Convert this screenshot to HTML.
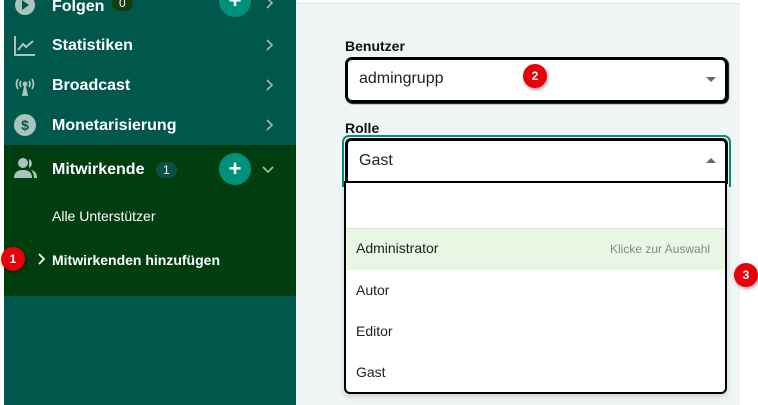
<!DOCTYPE html>
<html><head><style>
*{margin:0;padding:0;box-sizing:border-box}
body{width:758px;height:405px;overflow:hidden;background:#fff;font-family:"Liberation Sans",sans-serif;position:relative}
.sb{position:absolute;left:4px;top:0;width:292px;height:405px;background:#00574c}
.act{position:absolute;left:4px;top:145px;width:292px;height:151px;background:#003e0f}
.item{position:absolute;left:52px;color:#fff;font-weight:bold;font-size:16px}
.chev{position:absolute;left:264px;width:10px;height:12px}
.ico{position:absolute;left:14px;width:22px;height:22px}
.plus{position:absolute;left:219px;width:32px;height:32px;border-radius:50%;background:#00917c;color:#fff;text-align:center;line-height:31px;font-size:22px;font-weight:bold}
.badge{position:absolute;background:#0b5047;color:#fff;font-size:12px;border-radius:8px;padding:1px 7px}
.main{position:absolute;left:296px;top:3px;width:444px;height:402px;background:#eff6f5;border-top:1px solid #d5e8d8}
.lbl{position:absolute;left:345px;font-weight:bold;font-size:14px;color:#111}
.num{position:absolute;width:24px;height:24px;border-radius:50%;background:#e8000b;color:#fff;font-weight:bold;font-size:12px;text-align:center;line-height:24px;box-shadow:1px 2px 3px rgba(0,0,0,.35)}
.opt{position:absolute;left:356px;font-size:14px;color:#222}
</style></head><body>
<div class="sb"></div><div class="act"></div>
<svg class="ico" style="top:-6px" viewBox="0 0 22 22"><circle cx="11" cy="11" r="10" fill="#a9c4bd"/><path d="M8 6v10l7-5z" fill="#00574c"/></svg>
<div class="item" style="top:-2px">Folgen</div>
<div class="badge" style="left:112px;top:-5px;background:#0e3d10">0</div>
<div class="plus" style="top:-15px">+</div>
<svg class="chev" style="top:-3px" viewBox="0 0 10 12"><path d="M3 1l5 5-5 5" fill="none" stroke="#9fbdb6" stroke-width="1.6"/></svg>

<svg class="ico" style="top:35px" viewBox="0 0 22 22" fill="none" stroke="#a9c4bd" stroke-width="2"><path d="M1 1v19h20M4 15l5-6 3 3 7-6"/></svg>
<div class="item" style="top:37px">Statistiken</div>
<svg class="chev" style="top:39px" viewBox="0 0 10 12"><path d="M3 1l5 5-5 5" fill="none" stroke="#9fbdb6" stroke-width="1.6"/></svg>

<svg class="ico" style="top:75px" viewBox="0 0 22 22" fill="none" stroke="#a9c4bd" stroke-width="1.8"><path d="M4 4q-3 5 0 10M18 4q3 5 0 10M7 6q-2 3 0 6M15 6q2 3 0 6"/><circle cx="11" cy="9" r="1.6" fill="#a9c4bd"/><path d="M9 20l2-9 2 9z" fill="#a9c4bd"/></svg>
<div class="item" style="top:77px">Broadcast</div>
<svg class="chev" style="top:79px" viewBox="0 0 10 12"><path d="M3 1l5 5-5 5" fill="none" stroke="#9fbdb6" stroke-width="1.6"/></svg>

<svg class="ico" style="top:114px" viewBox="0 0 22 22"><circle cx="11" cy="11" r="11" fill="#a9c4bd"/><text x="11" y="16" text-anchor="middle" font-size="14" font-weight="bold" fill="#00574c" font-family="Liberation Sans">$</text></svg>
<div class="item" style="top:117px">Monetarisierung</div>
<svg class="chev" style="top:119px" viewBox="0 0 10 12"><path d="M3 1l5 5-5 5" fill="none" stroke="#9fbdb6" stroke-width="1.6"/></svg>

<svg class="ico" style="top:157px;width:24px" viewBox="0 0 24 22" fill="#a9c4bd"><circle cx="9" cy="6" r="5"/><path d="M0 21q0-8 9-8t9 8z"/><path d="M15 2a5 5 0 0 1 0 9zM17 13q6 1 6 8h-3q0-5-3-8z"/></svg>
<div class="item" style="top:161px">Mitwirkende</div>
<div class="badge" style="left:156px;top:162px">1</div>
<div class="plus" style="top:153px">+</div>
<svg style="position:absolute;left:262px;top:165px;width:12px;height:8px" viewBox="0 0 12 8"><path d="M1 2l5 5 5-5" fill="none" stroke="#9fbdb6" stroke-width="1.6"/></svg>
<div style="position:absolute;left:52px;top:208px;color:#fff;font-size:14px">Alle Unterstützer</div>
<svg style="position:absolute;left:37px;top:253px;width:8px;height:12px" viewBox="0 0 8 12"><path d="M2 1l5 5-5 5" fill="none" stroke="#fff" stroke-width="1.8"/></svg>
<div style="position:absolute;left:52px;top:252px;color:#fff;font-size:14px;font-weight:bold">Mitwirkenden hinzufügen</div>
<div class="num" style="left:1px;top:247px">1</div>

<div class="main"></div>
<div class="lbl" style="top:38px">Benutzer</div>
<div style="position:absolute;left:345px;top:57px;width:383px;height:46px;border:3px solid #000;border-radius:7px;background:#fff;box-shadow:1px 1px 1px #000"></div>
<div style="position:absolute;left:359px;top:70px;font-size:16px;color:#222">admingrupp</div>
<div style="position:absolute;left:706px;top:77px;border:5px solid transparent;border-top:5px solid #666"></div>
<div class="num" style="left:523px;top:64px">2</div>

<div class="lbl" style="top:120px">Rolle</div>
<div style="position:absolute;left:342px;top:135px;width:389px;height:52px;border:2px solid #00917c;border-bottom:none;border-radius:7px 7px 0 0"></div>
<div style="position:absolute;left:345px;top:138px;width:383px;height:46px;border:3px solid #000;border-bottom:none;border-radius:6px 6px 0 0;background:#fff"></div>
<div style="position:absolute;left:359px;top:152px;font-size:16px;color:#222">Gast</div>
<div style="position:absolute;left:706px;top:153px;border:5px solid transparent;border-bottom:5px solid #666"></div>

<div style="position:absolute;left:344px;top:181px;width:383px;height:213px;border:2px solid #000;border-radius:0 0 6px 6px;background:#fff;box-shadow:0 3px 6px rgba(0,0,0,.15);overflow:hidden">
<div style="position:absolute;left:0;top:45px;width:100%;height:42px;background:#e8f6e4;border-top:1px solid #d3e9d0"></div>
</div>
<div class="opt" style="top:240px">Administrator</div>
<div style="position:absolute;left:610px;top:242px;font-size:12px;color:#888">Klicke zur Auswahl</div>
<div class="opt" style="top:282px">Autor</div>
<div class="opt" style="top:323px">Editor</div>
<div class="opt" style="top:364px">Gast</div>
<div class="num" style="left:734px;top:263px">3</div>
</body></html>
